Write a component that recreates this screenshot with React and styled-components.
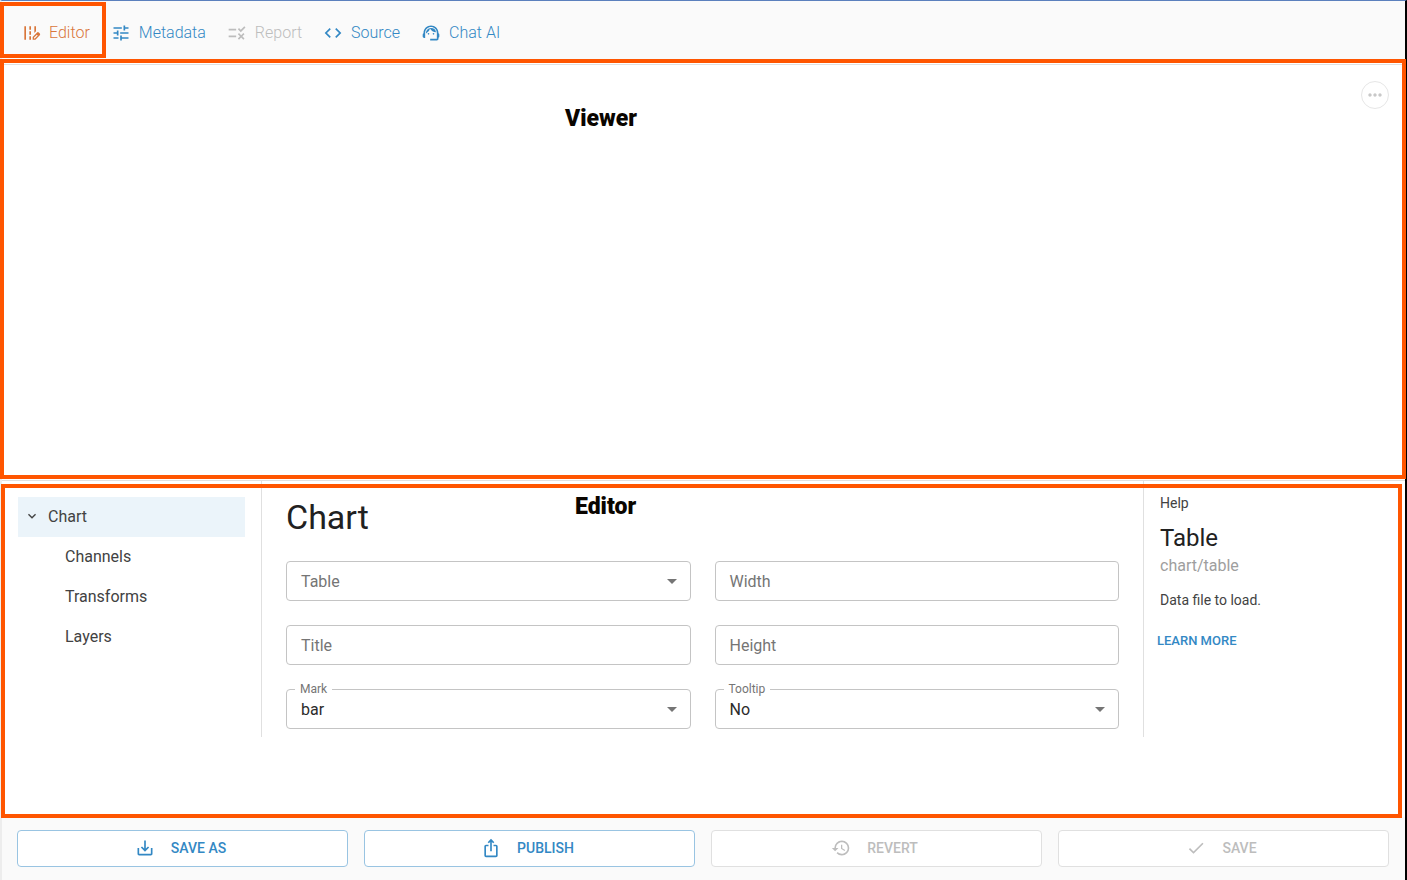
import React from "react";
import styled, { createGlobalStyle, css } from "styled-components";
import {
  MdEditRoad,
  MdTune,
  MdRule,
  MdCode,
  MdSupportAgent,
  MdMoreHoriz,
  MdSaveAlt,
  MdIosShare,
  MdHistory,
  MdCheck,
  MdExpandMore,
  MdArrowDropDown,
} from "react-icons/md";

const GlobalStyle = createGlobalStyle`
  *, *::before, *::after { box-sizing: border-box; }
  body {
    margin: 0;
    font-family: Roboto, "Liberation Sans", sans-serif;
    font-size: 16px;
    color: #212121;
    background: #ffffff;
  }
  button, input, select { font: inherit; }
`;

const colors = {
  frame: "#ff5500",
  primary: "#3388c4",
  active: "#d9763a",
  disabled: "#bdbdbd",
  line: "#e0e0e0",
  bar: "#fafafa",
};

const Page = styled.div`
  display: flex;
  flex-direction: column;
  min-height: 100vh;
  border-top: 1px solid #5b80bd;
  border-right: 2px solid #000000;
  border-left: 2px solid #ededed;
`;

const frame = css`
  position: absolute;
  border: 4px solid ${colors.frame};
  pointer-events: none;
  content: "";
`;

const Header = styled.header`
  position: relative;
  display: flex;
  align-items: center;
  gap: 21px;
  height: 64px;
  padding: 0 19px;
  background: linear-gradient(${colors.bar} 60px, #ffffff 60px);
  border-bottom: 1px solid ${colors.line};
`;

const Tab = styled.button`
  position: relative;
  display: flex;
  align-items: center;
  gap: 8px;
  height: 24px;
  padding: 0;
  border: 0;
  background: none;
  font-weight: 300;
  color: ${(p) => (p.$active ? colors.active : p.disabled ? colors.disabled : colors.primary)};

  svg { width: 20px; height: 20px; }

  &::after {
    ${(p) => p.$active && css`
      ${frame}
      inset: -19px -16px -13px -21px;
    `}
  }
`;

const Viewer = styled.main`
  position: relative;
  flex: 1;
  display: flex;
  justify-content: flex-end;
  align-items: flex-start;
  padding: 16px;
  border-bottom: 1px solid ${colors.line};

  &::after {
    ${frame}
    inset: -6px -1px 1px -2px;
  }
`;

const Caption = styled.h2`
  position: absolute;
  top: ${(p) => p.$top};
  left: ${(p) => p.$left};
  margin: 0;
  font-size: 23px;
  line-height: 24px;
  font-weight: 900;
  color: #0a0500;
`;

const MoreButton = styled.button`
  display: grid;
  place-items: center;
  width: 28px;
  height: 28px;
  padding: 0;
  border: 1px solid #e6e6e6;
  border-radius: 50%;
  background: #ffffff;
  color: #c8c8c8;

  svg { width: 20px; height: 20px; }
`;

const Editor = styled.section`
  position: relative;
  height: 336px;

  &::after {
    ${frame}
    inset: 3px 3px -1px -1px;
  }
`;

const Columns = styled.div`
  display: grid;
  grid-template-columns: 260px 1fr 262px;
  height: 256px;
`;

const Nav = styled.nav`
  padding: 16px;
  border-right: 1px solid ${colors.line};
`;

const NavItem = styled.a`
  display: flex;
  align-items: center;
  gap: 8px;
  height: 40px;
  padding-left: ${(p) => (p.$nested ? "47px" : "6px")};
  padding-bottom: 2px;
  background: ${(p) => (p.$selected ? "#ebf4fa" : "transparent")};
  color: #424242;
  text-decoration: none;

  svg { width: 16px; height: 16px; }
`;

const FormPanel = styled.div`
  padding: 16px 24px 8px;
`;

const Title = styled.h1`
  margin: 0 0 24px;
  font-size: 34px;
  line-height: 40px;
  font-weight: 400;
`;

const Form = styled.form`
  display: grid;
  grid-template-columns: 1fr 1fr;
  gap: 24px;
`;

const Field = styled.div`
  position: relative;
  display: flex;
`;

const FieldLabel = styled.label`
  position: absolute;
  left: ${(p) => (p.$raised ? "9px" : "15px")};
  top: ${(p) => (p.$raised ? "-8px" : "11px")};
  padding: ${(p) => (p.$raised ? "0 5px" : "0")};
  background: #ffffff;
  font-size: ${(p) => (p.$raised ? "12px" : "16px")};
  line-height: ${(p) => (p.$raised ? "16px" : "20px")};
  color: #757575;
  pointer-events: none;
`;

const control = css`
  width: 100%;
  height: 40px;
  padding: 0 14px;
  border: 1px solid #c4c4c4;
  border-radius: 4px;
  background: #ffffff;
  color: #2b2b2b;
  appearance: none;
`;

const TextInput = styled.input`
  ${control}
`;

const Select = styled.select`
  ${control}
`;

const SelectArrow = styled(MdArrowDropDown)`
  position: absolute;
  right: 7px;
  top: 8px;
  width: 24px;
  height: 24px;
  color: #757575;
  pointer-events: none;
`;

const Help = styled.aside`
  padding: 12px 16px;
  border-left: 1px solid ${colors.line};
`;

const HelpText = styled.p`
  margin: 0;
  font-size: 14px;
  line-height: 20px;
  color: #424242;
`;

const HelpTitle = styled.h3`
  margin: 9px 0 0;
  font-size: 24px;
  line-height: 32px;
  font-weight: 400;
`;

const HelpPath = styled.p`
  margin: 0 0 12px;
  line-height: 24px;
  color: #9e9e9e;
`;

const LearnMore = styled.a`
  display: inline-block;
  margin: 21px 0 0 -3px;
  font-size: 13px;
  line-height: 20px;
  font-weight: 500;
  color: ${colors.primary};
  text-decoration: none;
`;

const Footer = styled.footer`
  display: grid;
  grid-template-columns: repeat(4, 1fr);
  gap: 16px;
  padding: 13px 16px 13px 15px;
  background: ${colors.bar};
`;

const Action = styled.button`
  display: flex;
  align-items: center;
  justify-content: center;
  gap: 16px;
  height: 37px;
  padding: 0 8px 2px 4px;
  border: 1px solid ${(p) => (p.disabled ? colors.line : "#99c4e2")};
  border-radius: 4px;
  background: #ffffff;
  font-size: 14px;
  font-weight: 500;
  color: ${(p) => (p.disabled ? colors.disabled : colors.primary)};

  svg { width: 20px; height: 20px; }
`;

const tabs = [
  { label: "Editor", icon: MdEditRoad, active: true },
  { label: "Metadata", icon: MdTune },
  { label: "Report", icon: MdRule, disabled: true },
  { label: "Source", icon: MdCode },
  { label: "Chat AI", icon: MdSupportAgent },
];

const fields = [
  { id: "table", label: "Table", select: true },
  { id: "width", label: "Width" },
  { id: "title", label: "Title" },
  { id: "height", label: "Height" },
  { id: "mark", label: "Mark", select: true, value: "bar" },
  { id: "tooltip", label: "Tooltip", select: true, value: "No" },
];

const actions = [
  { label: "SAVE AS", icon: MdSaveAlt },
  { label: "PUBLISH", icon: MdIosShare },
  { label: "REVERT", icon: MdHistory, disabled: true },
  { label: "SAVE", icon: MdCheck, disabled: true },
];

function FormField({ id, label, select, value }) {
  return (
    <Field>
      {select ? (
        <>
          <Select id={id} defaultValue={value || ""}>
            <option value={value || ""}>{value || ""}</option>
          </Select>
          <SelectArrow />
        </>
      ) : (
        <TextInput id={id} type="text" />
      )}
      <FieldLabel htmlFor={id} $raised={Boolean(value)}>{label}</FieldLabel>
    </Field>
  );
}

export default function App() {
  return (
    <>
      <GlobalStyle />
      <Page>
        <Header>
          {tabs.map(({ label, icon: Icon, active, disabled }) => (
            <Tab key={label} type="button" $active={active} disabled={disabled}>
              <Icon />
              {label}
            </Tab>
          ))}
        </Header>
        <Viewer>
          <Caption $top="42px" $left="563px">Viewer</Caption>
          <MoreButton type="button" aria-label="More">
            <MdMoreHoriz />
          </MoreButton>
        </Viewer>
        <Editor>
          <Caption $top="14px" $left="573px">Editor</Caption>
          <Columns>
            <Nav>
              <NavItem href="#chart" $selected>
                <MdExpandMore />
                Chart
              </NavItem>
              <NavItem href="#channels" $nested>Channels</NavItem>
              <NavItem href="#transforms" $nested>Transforms</NavItem>
              <NavItem href="#layers" $nested>Layers</NavItem>
            </Nav>
            <FormPanel>
              <Title>Chart</Title>
              <Form>
                {fields.map((field) => (
                  <FormField key={field.id} {...field} />
                ))}
              </Form>
            </FormPanel>
            <Help>
              <HelpText>Help</HelpText>
              <HelpTitle>Table</HelpTitle>
              <HelpPath>chart/table</HelpPath>
              <HelpText>Data file to load.</HelpText>
              <LearnMore href="#learn-more">LEARN MORE</LearnMore>
            </Help>
          </Columns>
        </Editor>
        <Footer>
          {actions.map(({ label, icon: Icon, disabled }) => (
            <Action key={label} type="button" disabled={disabled}>
              <Icon />
              {label}
            </Action>
          ))}
        </Footer>
      </Page>
    </>
  );
}
